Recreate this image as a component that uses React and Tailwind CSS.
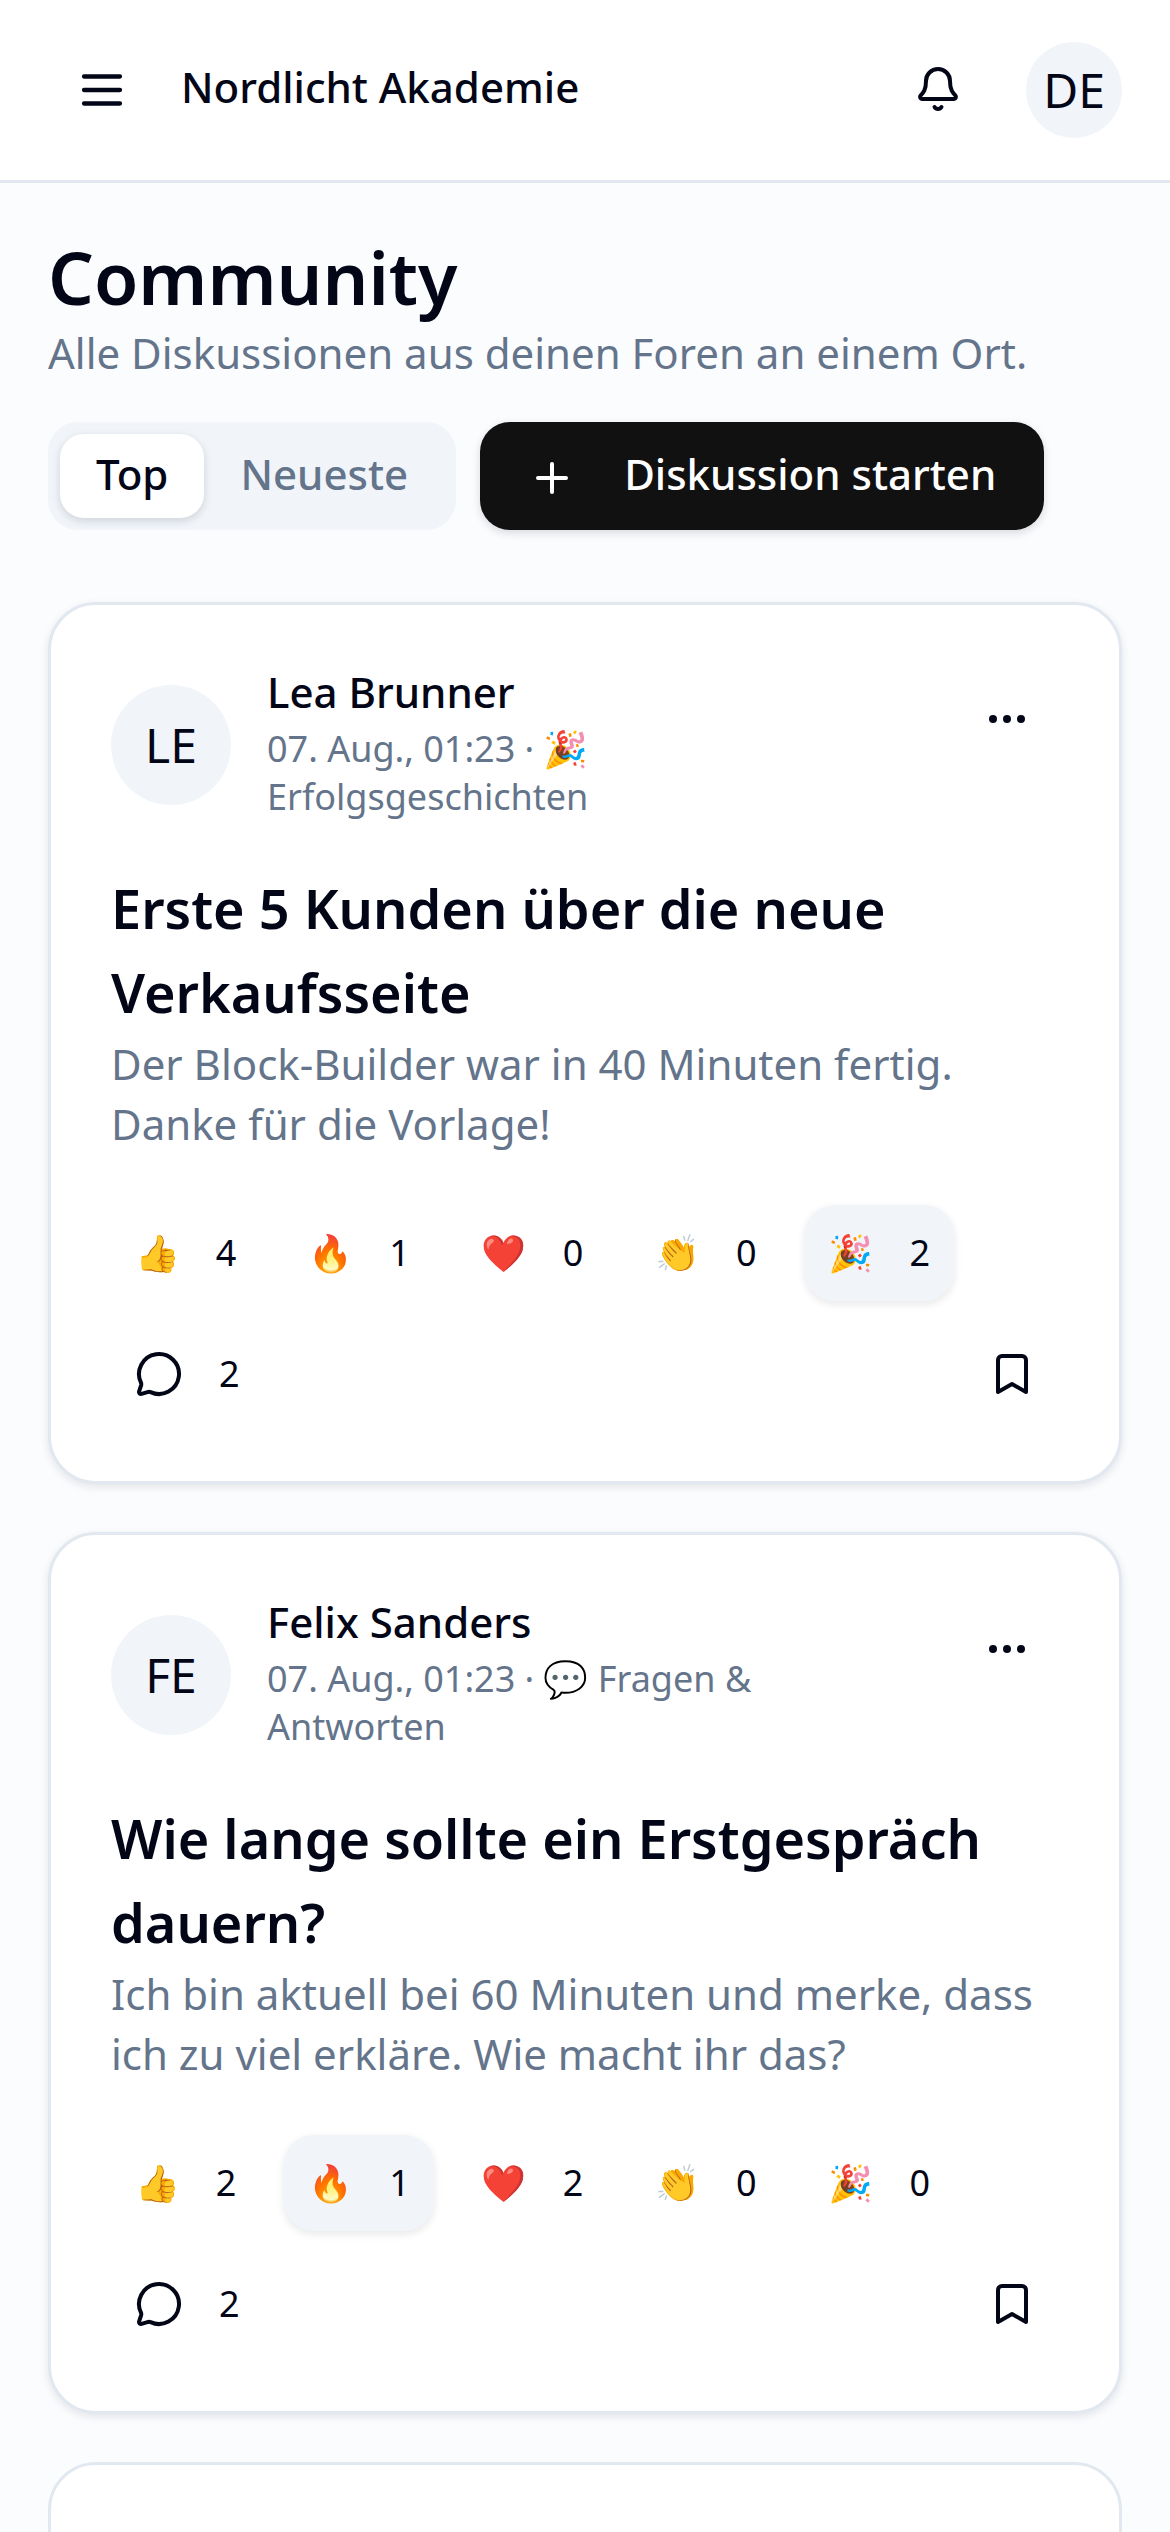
import React from "react";
import { Bell, Plus, Ellipsis, MessageCircle, Bookmark } from "lucide-react";

const posts = [
  {
    initials: "LE",
    name: "Lea Brunner",
    meta: "07. Aug., 01:23 · 🎉 Erfolgsgeschichten",
    title: "Erste 5 Kunden über die neue Verkaufsseite",
    body: "Der Block-Builder war in 40 Minuten fertig. Danke für die Vorlage!",
    reactions: [["👍", 4], ["🔥", 1], ["❤️", 0], ["👏", 0], ["🎉", 2, true]],
    comments: 2,
  },
  {
    initials: "FE",
    name: "Felix Sanders",
    meta: "07. Aug., 01:23 · 💬 Fragen & Antworten",
    title: "Wie lange sollte ein Erstgespräch dauern?",
    body: "Ich bin aktuell bei 60 Minuten und merke, dass ich zu viel erkläre. Wie macht ihr das?",
    reactions: [["👍", 2], ["🔥", 1, true], ["❤️", 2], ["👏", 0], ["🎉", 0]],
    comments: 2,
  },
];

const PostCard = ({ post }) => (
  <div className="bg-white border-[3px] border-[#e2e8f0] rounded-[48px] shadow-[0_3px_9px_rgba(15,23,42,0.1)] p-[60px] h-[882px] shrink-0">
    {/* Kopf */}
    <div className="flex items-center gap-[36px] h-[159px]">
      <div className="w-[120px] h-[120px] shrink-0 rounded-full bg-[#f1f5f9] flex items-center justify-center text-[48px]">
        {post.initials}
      </div>
      <div className="flex-1 min-w-0 pr-[120px] -mt-[6px]">
        <div className="text-[42px] leading-[60px] mb-[3px] font-medium">{post.name}</div>
        <div className="text-[36px] leading-[48px] text-[#64748b]">{post.meta}</div>
      </div>
      <button className="self-start mt-[12px] w-[84px] h-[84px] flex items-center justify-center mr-[10px]">
        <Ellipsis className="w-[48px] h-[48px]" />
      </button>
    </div>

    {/* Inhalt */}
    <h2 className="mt-[42px] text-[54px] leading-[84px] font-semibold">{post.title}</h2>
    <p className="text-[42px] leading-[60px] text-[#64748b]">{post.body}</p>

    {/* Reaktionen */}
    <div className="mt-[51px] flex gap-[24px]">
      {post.reactions.map(([emoji, count, active]) => (
        <button
          key={emoji}
          className={`h-[96px] px-[24px] rounded-[30px] flex items-center gap-[36px] text-[36px] ${
            active ? "bg-[#f1f5f9] shadow-[0_3px_9px_rgba(15,23,42,0.1)]" : ""
          }`}
        >
          <span>{emoji}</span>
          <span>{count}</span>
        </button>
      ))}
    </div>

    {/* Aktionen */}
    <div className="mt-[46px] flex items-center justify-between">
      <div className="flex items-center gap-[36px] pl-[24px] text-[36px]">
        <MessageCircle className="w-[48px] h-[48px]" />
        <span>{post.comments}</span>
      </div>
      <Bookmark className="w-[48px] h-[48px] mr-[23px]" />
    </div>
  </div>
);

export default function App() {
  return (
    <div className="h-[2532px] overflow-hidden bg-[#fbfcfe] text-[#020617] font-['Noto_Sans','Noto_Color_Emoji',sans-serif]">
      {/* Kopfzeile */}
      <header className="h-[183px] bg-white border-b-[3px] border-[#e2e8f0] flex items-center pl-[75px] pr-[48px]">
        <svg className="w-[54px] h-[54px] shrink-0" viewBox="0 0 24 24" fill="none" stroke="currentColor" strokeWidth="1.9" strokeLinecap="round">
          <path d="M4 6h16M4 12h16M4 18h16" />
        </svg>
        <div className="ml-[52px] text-[42px] font-medium flex-1 -mt-[7px]">Nordlicht Akademie</div>
        <Bell className="w-[48px] h-[48px] mr-[64px] -mt-[2px]" />
        <div className="w-[96px] h-[96px] rounded-full bg-[#f1f5f9] flex items-center justify-center text-[48px]">DE</div>
      </header>

      <main className="px-[48px] pt-[52px] flex flex-col">
        <h1 className="text-[72px] leading-[84px] font-semibold mb-[4px]">Community</h1>
        <p className="text-[42px] leading-[60px] text-[#64748b]">Alle Diskussionen aus deinen Foren an einem Ort.</p>

        <div className="mt-[39px] flex gap-[24px]">
          <div className="bg-[#f1f5f9] rounded-[30px] p-[12px] h-[108px] flex items-center">
            <button className="h-[84px] px-[36px] pb-[6px] rounded-[24px] bg-white shadow-[0_3px_9px_rgba(15,23,42,0.15)] text-[42px] font-medium">Top</button>
            <button className="h-[84px] px-[36px] pb-[6px] text-[42px] font-medium text-[#64748b]">Neueste</button>
          </div>
          <button className="h-[108px] px-[48px] rounded-[30px] bg-[#111111] text-white text-[42px] font-medium flex items-center gap-[48px] shadow-[0_3px_9px_rgba(15,23,42,0.15)]">
            <Plus className="w-[48px] h-[48px] mt-[3px]" />
            <span className="-mt-[6px]">Diskussion starten</span>
          </button>
        </div>

        <div className="mt-[72px] flex flex-col gap-[48px]">
          {posts.map((p) => (
            <PostCard key={p.name} post={p} />
          ))}
          <div className="bg-white border-[3px] border-[#e2e8f0] rounded-[48px] h-[400px] shrink-0" />
        </div>
      </main>
    </div>
  );
}
